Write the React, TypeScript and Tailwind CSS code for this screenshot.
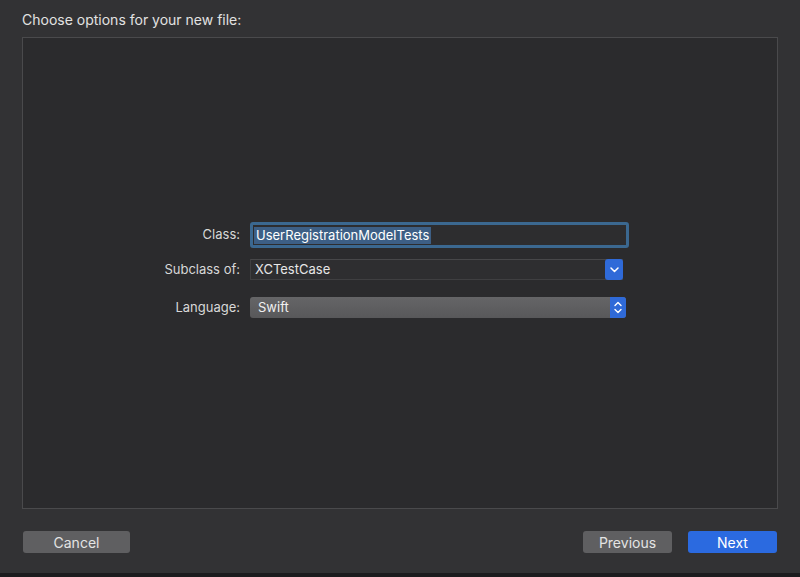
import React from 'react';

function ChevronDown() {
  return (
    <svg width="9" height="6" viewBox="0 0 9 6" fill="none">
      <path d="M1 1l3.5 3.5L8 1" stroke="white" strokeWidth="1.5" strokeLinecap="round" strokeLinejoin="round" />
    </svg>
  );
}

function UpDown() {
  return (
    <svg width="8" height="13" viewBox="0 0 8 13" fill="none">
      <path d="M1 4.5L4 1.5l3 3" stroke="white" strokeWidth="1.4" strokeLinecap="round" strokeLinejoin="round" />
      <path d="M1 8.5l3 3 3-3" stroke="white" strokeWidth="1.4" strokeLinecap="round" strokeLinejoin="round" />
    </svg>
  );
}

export default function App() {
  return (
    <div
      className="w-[800px] h-[577px] bg-[#323234] flex flex-col text-[#dfdfdf] overflow-hidden"
      style={{ fontFamily: 'Inter, "Liberation Sans", Arial, sans-serif' }}
    >
      {/* Header */}
      <div className="px-[22px] pt-[9px] h-[37px] text-[14px] text-[#e2e2e2]">
        Choose options for your new file:
      </div>

      {/* Options panel */}
      <div className="mx-[22px] h-[472px] border border-[#4a4a4c] bg-[#2b2b2d] flex flex-col pt-[184px]">
        <div className="grid grid-cols-[217px_1fr] gap-x-[10px] items-center text-[13px]">
          <div className="text-right text-[#d8d8d8]">Class:</div>
          <div className="w-[379px] h-[26px] rounded-[3px] border-[3px] border-[#3b6890] bg-[#2d2d2f] flex items-center pl-[1px]">
            <span className="bg-[#3d5f85] text-white px-[2px] leading-[17px]">UserRegistrationModelTests</span>
          </div>

          <div className="text-right text-[#d8d8d8] mt-[11px]">Subclass of:</div>
          <div className="mt-[11px] w-[373px] h-[21px] border border-[#3f3f41] border-t-[#474749] bg-[#2e2e30] flex items-center">
            <span className="flex-1 pl-[4px] text-[#e6e6e6]">XCTestCase</span>
            <div className="w-[18px] h-[21px] -mr-px bg-[#2f6ad8] rounded-[3px] flex items-center justify-center">
              <ChevronDown />
            </div>
          </div>

          <div className="text-right text-[#d8d8d8] mt-[17px]">Language:</div>
          <div className="mt-[17px] w-[376px] h-[21px] rounded-[3px] bg-gradient-to-b from-[#656567] to-[#58585a] flex items-center">
            <span className="flex-1 pl-[8px] text-[#f0f0f0]">Swift</span>
            <div className="w-[16px] h-[21px] bg-[#2f6ad8] rounded-r-[3px] flex items-center justify-center">
              <UpDown />
            </div>
          </div>
        </div>
      </div>

      {/* Buttons */}
      <div className="flex items-center px-[23px] pt-[22px] text-[14px]">
        <button className="w-[107px] h-[22px] rounded-[3px] bg-[#5f5f61] text-[#e4e4e4]">Cancel</button>
        <div className="flex-1" />
        <button className="w-[89px] h-[22px] rounded-[3px] bg-[#5f5f61] text-[#e4e4e4]">Previous</button>
        <button className="ml-[16px] w-[89px] h-[22px] rounded-[3px] bg-[#2b6ae0] text-white">Next</button>
      </div>

      <div className="flex-1" />
      <div className="h-[4px] bg-[#1c1c1e]" />
    </div>
  );
}
